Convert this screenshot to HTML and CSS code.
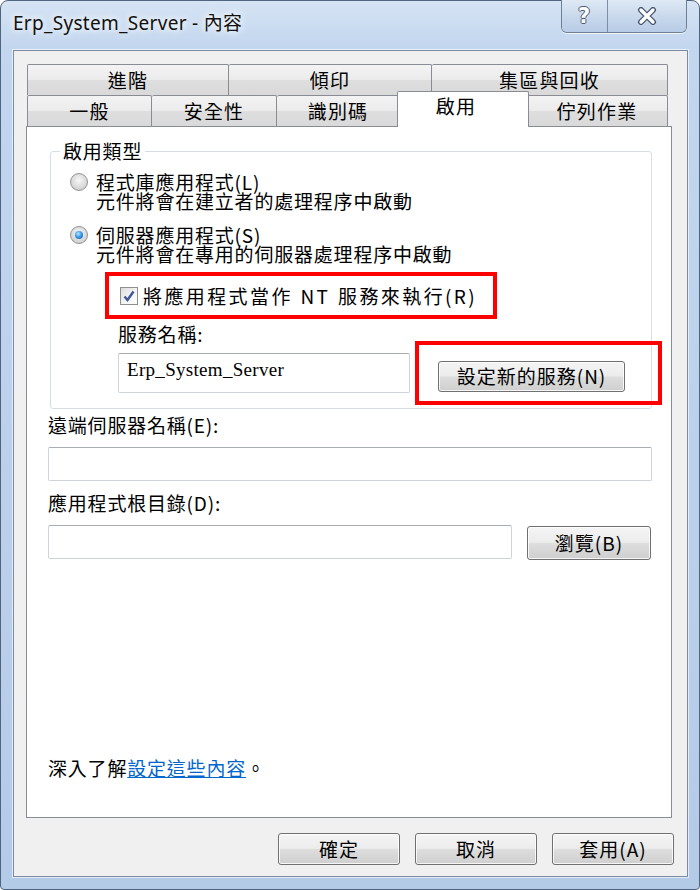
FILE: index.html
```html
<!DOCTYPE html>
<html lang="zh-Hant">

<head>
    <meta charset="UTF-8">
    <meta name="viewport" content="width=device-width, initial-scale=1.0">
    <title>Erp_System_Server - 內容</title>
    <link rel="stylesheet" href="styles.css">
</head>

<body>
    <div class="window">
        <div class="titlebar">
            <span class="title">Erp_System_Server - 內容</span>
            <div class="caption-btns">
                <span class="cap-btn help">?</span>
                <span class="cap-btn close">
                    <svg width="24" height="18" viewBox="0 0 24 18">
                        <path d="M6 3 L18 15 M18 3 L6 15" stroke="#45556b" stroke-width="6" stroke-linecap="round" fill="none" />
                        <path d="M6 3 L18 15 M18 3 L6 15" stroke="#fff" stroke-width="3.4" stroke-linecap="round" fill="none" />
                    </svg>
                </span>
            </div>
        </div>

        <div class="client">
            <!-- pestanas -->
            <div class="tab-row row-back">
                <div class="tab">進階</div>
                <div class="tab">傾印</div>
                <div class="tab">集區與回收</div>
            </div>
            <div class="tab-row row-front">
                <div class="tab">一般</div>
                <div class="tab">安全性</div>
                <div class="tab">識別碼</div>
                <div class="tab active">啟用</div>
                <div class="tab">佇列作業</div>
            </div>

            <div class="panel">
                <fieldset class="group">
                    <legend>啟用類型</legend>

                    <div class="radio-item first">
                        <span class="radio"></span>
                        <div class="radio-text">
                            <div>程式庫應用程式(L)</div>
                            <div>元件將會在建立者的處理程序中啟動</div>
                        </div>
                    </div>
                    <div class="radio-item second">
                        <span class="radio checked"></span>
                        <div class="radio-text">
                            <div>伺服器應用程式(S)</div>
                            <div>元件將會在專用的伺服器處理程序中啟動</div>
                        </div>
                    </div>

                    <div class="mark mark-check">
                        <span class="checkbox">
                            <svg width="16" height="16" viewBox="0 0 16 16">
                                <path d="M3.5 8.5 L6.5 12 L12.5 3.5" stroke="#40569a" stroke-width="2.4" fill="none" />
                            </svg>
                        </span>
                        <span class="check-text">將應用程式當作 NT 服務來執行(R)</span>
                    </div>

                    <div class="field-label service-label">服務名稱:</div>
                    <div class="service-row">
                        <input class="textbox service-name" type="text" value="Erp_System_Server">
                        <div class="mark mark-btn">
                            <button class="btn new-service">設定新的服務(N)</button>
                        </div>
                    </div>
                </fieldset>

                <div class="field-label remote-label">遠端伺服器名稱(E):</div>
                <input class="textbox remote-name" type="text">

                <div class="field-label root-label">應用程式根目錄(D):</div>
                <div class="root-row">
                    <input class="textbox root-dir" type="text">
                    <button class="btn browse">瀏覽(B)</button>
                </div>

                <p class="learn-more">深入了解<a href="#">設定這些內容</a>。</p>
            </div>

            <div class="footer">
                <button class="btn dlg-btn">確定</button>
                <button class="btn dlg-btn">取消</button>
                <button class="btn dlg-btn">套用(A)</button>
            </div>
        </div>
    </div>
</body>

</html>
```

FILE: styles.css
```css
/* osnovno */
* {
    box-sizing: border-box;
}

body {
    margin: 0;
    background: #fff;
    font-family: "Noto Sans CJK TC", "Noto Sans", sans-serif;
    font-size: 19px;
    letter-spacing: 0.8px;
    color: #000;
}

/* prozor */
.window {
    width: 700px;
    height: 890px;
    border: 1px solid #4f6480;
    border-radius: 8px 8px 4px 4px;
    padding: 0 11px 12px 12px;
    background: linear-gradient(180deg, #d6e4f4 0%, #c2d6ee 45px, #b4cbe8 100%);
    display: flex;
    flex-direction: column;
}

.titlebar {
    height: 49px;
    display: flex;
    align-items: flex-start;
    flex-shrink: 0;
}

.title {
    font-family: "Noto Sans", "Noto Sans CJK TC", sans-serif;
    font-size: 19px;
    letter-spacing: 0.3px;
    line-height: 22px;
    margin-top: 11px;
    color: #111;
    text-shadow: 0 0 6px #fff, 0 0 10px rgba(255, 255, 255, 0.9);
}

.caption-btns {
    margin-left: auto;
    margin-right: 1px;
    margin-top: -1px;
    display: flex;
    height: 33px;
    border: 1px solid #6e7f96;
    border-top: 0;
    border-radius: 0 0 6px 6px;
    overflow: hidden;
    box-shadow: 0 1px 0 rgba(255, 255, 255, 0.7);
}

.cap-btn {
    display: flex;
    align-items: center;
    justify-content: center;
    background: linear-gradient(180deg, #dfe9f5 0%, #c9d9ec 50%, #b8cce6 100%);
}

.cap-btn.help {
    width: 46px;
    border-right: 1px solid #7d8da3;
    font-family: "DejaVu Sans", sans-serif;
    font-weight: bold;
    font-size: 21px;
    color: #fff;
    text-shadow: -1px 0 #4a5a70, 1px 0 #4a5a70, 0 -1px #4a5a70, 0 1px #4a5a70;
}

.cap-btn.close {
    width: 78px;
}

/* klijentska oblast */
.client {
    height: 827px;
    border: 1px solid #7c8ba0;
    background: #f0f0f0;
    padding: 13px 15px 0 12px;
    box-shadow: 0 0 0 1px rgba(255, 255, 255, 0.6);
}

.tab-row {
    display: grid;
    height: 31px;
    margin: 0 4px 0 1px;
}

.row-back {
    grid-template-columns: 202px 203px 1fr;
}

.row-front {
    grid-template-columns: 125px 125px 123px 127px 1fr;
}

.tab {
    border: 1px solid #898c95;
    border-bottom: 0;
    border-left: 0;
    border-radius: 2px 2px 0 0;
    background: linear-gradient(180deg, #f3f3f3 0%, #ebebeb 50%, #dedede 51%, #d9d9d9 100%);
    display: flex;
    align-items: center;
    justify-content: center;
    line-height: 20px;
    letter-spacing: 1.2px;
}

.tab:first-child {
    border-left: 1px solid #898c95;
}

.tab.active {
    position: relative;
    z-index: 2;
    margin: -4px -2px -1px -3px;
    border-left: 1px solid #898c95;
    background: #fff;
    align-items: flex-start;
    padding-top: 4px;
    padding-right: 14px;
}

/* panel */
.panel {
    height: 692px;
    border: 1px solid #898c95;
    background: #fff;
    padding: 14px 19px 0 21px;
    display: flex;
    flex-direction: column;
}

.group {
    margin: 0 0 0 2px;
    padding: 0 19px 3px 19px;
    border: 1px solid #d5dfe5;
    border-radius: 3px;
    min-width: 0;
}

.group legend {
    padding: 0 3px;
    margin-left: -10px;
    line-height: 20px;
}

.radio-item {
    display: flex;
    align-items: flex-start;
    gap: 8px;
}

.radio-item.first {
    margin-top: 11px;
}

.radio-item.second {
    margin-top: 15px;
}

.radio-text {
    line-height: 19px;
}

.radio {
    width: 18px;
    height: 18px;
    margin-top: 1px;
    flex-shrink: 0;
    border: 1px solid #939393;
    border-radius: 50%;
    background: radial-gradient(circle at 50% 40%, #f8f8f8 0%, #e0e0e0 45%, #c4c4c4 100%);
    position: relative;
}

.radio.checked::after {
    content: "";
    position: absolute;
    left: 4px;
    top: 4px;
    width: 8px;
    height: 8px;
    border-radius: 50%;
    background: radial-gradient(circle at 40% 35%, #bfe6ff 0%, #3a9be6 45%, #0b55a8 100%);
}

/* crveni okviri */
.mark {
    border: 4px solid #ff0000;
}

.mark-check {
    margin: 9px 0 0 35px;
    width: 392px;
    height: 47px;
    display: flex;
    align-items: center;
    gap: 5px;
    padding-left: 11px;
    line-height: 20px;
}

.check-text {
    letter-spacing: 2.4px;
    word-spacing: 1px;
}

.checkbox {
    width: 18px;
    height: 18px;
    border: 1px solid #8e8f8f;
    background: linear-gradient(135deg, #dcdcdc 0%, #f6f6f6 60%, #fff 100%);
    display: flex;
    align-items: center;
    justify-content: center;
}

.field-label {
    line-height: 20px;
}

.service-label {
    margin: 5px 0 0 48px;
}

.service-row {
    display: flex;
    align-items: center;
    gap: 5px;
    margin: -3px -30px 0 48px;
}

.mark-btn {
    width: 247px;
    height: 64px;
    display: flex;
    align-items: center;
    padding-left: 19px;
}

/* polja */
.textbox {
    border: 1px solid #cfd3da;
    border-top-color: #a9adb5;
    border-radius: 2px;
    background: #fff;
    margin: 0;
    font-family: "Liberation Serif", serif;
    font-size: 19px;
    letter-spacing: 0.3px;
    padding: 0 8px;
    outline: none;
}

.service-name {
    width: 292px;
    height: 40px;
    padding-bottom: 6px;
}

.remote-label {
    margin-top: 6px;
}

.remote-name {
    margin-top: 12px;
    width: 604px;
    height: 34px;
}

.root-label {
    margin-top: 12px;
}

.root-row {
    display: flex;
    gap: 15px;
    margin-top: 12px;
}

.root-dir {
    width: 464px;
    height: 34px;
}

/* dugmad */
.btn {
    font-family: "Noto Sans CJK TC", "Noto Sans", sans-serif;
    font-size: 19px;
    letter-spacing: 1px;
    color: #000;
    border: 1px solid #707070;
    border-radius: 3px;
    background: linear-gradient(180deg, #f4f4f4 0%, #ececec 48%, #dddddd 52%, #cfcfcf 100%);
    box-shadow: inset 0 0 0 1px rgba(255, 255, 255, 0.8);
    padding: 0;
    margin: 0;
    line-height: 20px;
}

.new-service {
    width: 187px;
    height: 31px;
    margin-top: 6px;
}

.browse {
    width: 124px;
    height: 34px;
    margin-top: 1px;
}

.learn-more {
    margin: auto 0 39px 0;
    line-height: 20px;
}

.learn-more a {
    color: #0066cc;
    text-decoration: underline;
}

.footer {
    display: flex;
    justify-content: flex-end;
    gap: 15px;
    padding-top: 15px;
    margin-right: -2px;
}

.dlg-btn {
    width: 122px;
    height: 32px;
}
```
